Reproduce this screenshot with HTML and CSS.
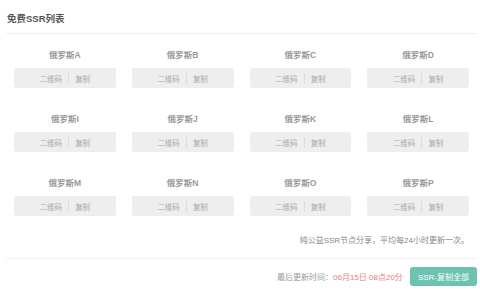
FILE: index.html
```html
<!DOCTYPE html>
<html lang="zh-CN">
<head>
  <meta charset="UTF-8">
  <title>免费SSR列表</title>
  <link rel="stylesheet" href="styles.css">
</head>
<body>
  <div class="panel">
    <div class="panel-head">免费SSR列表</div>

    <div class="node-grid">
      <div class="node"><div class="node-name">俄罗斯A</div><div class="node-btns"><span>二维码</span><i></i><span>复制</span></div></div>
      <div class="node"><div class="node-name">俄罗斯B</div><div class="node-btns"><span>二维码</span><i></i><span>复制</span></div></div>
      <div class="node"><div class="node-name">俄罗斯C</div><div class="node-btns"><span>二维码</span><i></i><span>复制</span></div></div>
      <div class="node"><div class="node-name">俄罗斯D</div><div class="node-btns"><span>二维码</span><i></i><span>复制</span></div></div>
      <div class="node"><div class="node-name">俄罗斯I</div><div class="node-btns"><span>二维码</span><i></i><span>复制</span></div></div>
      <div class="node"><div class="node-name">俄罗斯J</div><div class="node-btns"><span>二维码</span><i></i><span>复制</span></div></div>
      <div class="node"><div class="node-name">俄罗斯K</div><div class="node-btns"><span>二维码</span><i></i><span>复制</span></div></div>
      <div class="node"><div class="node-name">俄罗斯L</div><div class="node-btns"><span>二维码</span><i></i><span>复制</span></div></div>
      <div class="node"><div class="node-name">俄罗斯M</div><div class="node-btns"><span>二维码</span><i></i><span>复制</span></div></div>
      <div class="node"><div class="node-name">俄罗斯N</div><div class="node-btns"><span>二维码</span><i></i><span>复制</span></div></div>
      <div class="node"><div class="node-name">俄罗斯O</div><div class="node-btns"><span>二维码</span><i></i><span>复制</span></div></div>
      <div class="node"><div class="node-name">俄罗斯P</div><div class="node-btns"><span>二维码</span><i></i><span>复制</span></div></div>
    </div>

    <div class="note">纯公益SSR节点分享，平均每24小时更新一次。</div>

    <div class="panel-foot">
      <span class="update">最后更新时间：<em>06月15日 08点20分</em></span>
      <button class="copy-all">SSR-复制全部</button>
    </div>
  </div>
</body>
</html>
```

FILE: styles.css
```css
body {
  margin: 0;
  background: #fff;
  font-family: "Liberation Sans", "Noto Sans CJK SC", sans-serif;
  color: #666;
}

.panel {
  padding: 0 3px 0 6px;
}

.panel-head {
  height: 33px;
  line-height: 38px;
  padding-left: 1px;
  font-size: 9.5px;
  font-weight: bold;
  color: #555;
  border-bottom: 1px solid #f0f0f0;
}

.node-grid {
  display: grid;
  grid-template-columns: repeat(4, 1fr);
  row-gap: 24px;
  padding-top: 14px;
}

.node {
  text-align: center;
}

.node-name {
  line-height: 14px;
  font-size: 8.5px;
  font-weight: bold;
  color: #999;
  margin-bottom: 6px;
}

.node-btns {
  margin: 0 8px;
  height: 20px;
  background: #eee;
  border-radius: 3px;
  display: flex;
  align-items: center;
  justify-content: center;
  gap: 6px;
  font-size: 7.5px;
  color: #aaa;
}

.node-btns i {
  width: 1px;
  height: 11px;
  background: #ddd;
}

.note {
  margin-top: 18px;
  padding: 0 8px 10px 0;
  line-height: 14px;
  text-align: right;
  font-size: 8px;
  color: #888;
  border-bottom: 1px solid #f0f0f0;
}

.panel-foot {
  display: flex;
  justify-content: flex-end;
  align-items: center;
  gap: 7px;
  padding-top: 8px;
}

.update {
  font-size: 8px;
  color: #999;
}

.update em {
  font-style: normal;
  color: #f47a7a;
}

.copy-all {
  height: 19px;
  padding: 0 8px;
  border: none;
  border-radius: 3px;
  background: #6cc3b2;
  color: #fff;
  font-family: inherit;
  font-size: 8px;
}
```
